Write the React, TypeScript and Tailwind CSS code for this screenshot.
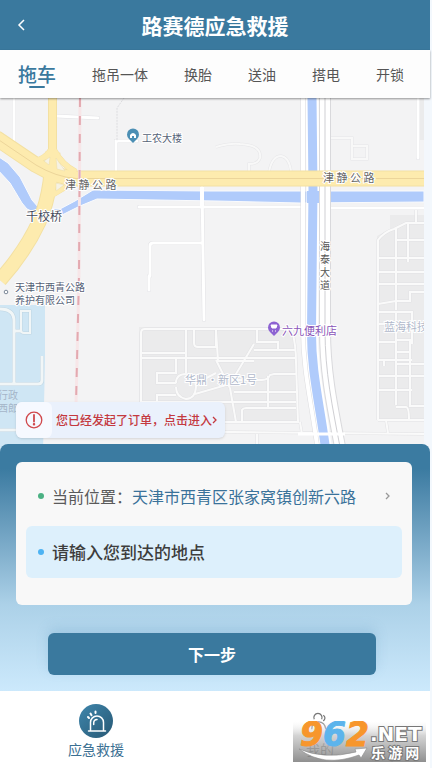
import React, { useState } from 'react';

const services = ['拖车', '拖吊一体', '换胎', '送油', '搭电', '开锁'];

const minorRoads = [
    'M14 98V143',
    'M56 116L98 118',
    'M116 172V141H137',
    'M139 207H302',
    'M150 276V246Q150 243 153 243H202',
    'M202 186L204 320',
    'M149 276V290',
    'M418 98V158',
    'M329 208H424',
];

const blockRoads = [
    'M141 432V333Q141 329 145 329H290',
    'M141 353H185M141 358H295',
    'M186 329V373M194 329V343Q194 347 198 347H216V330',
    'M176 358V373H157V383H176M157 403V395H176M141 402H296',
    'M176 383Q176 374 186 374Q196 376 196 387Q195 399 186 399Q176 397 176 387',
    'M216 360L230 388M195 384L216 373M195 394L230 384L254 344M216 330L218 361H254',
    'M257 330V342H278V350M254 350H295M230 380H262Q268 380 270 375L274 374H296',
    'M268 376V408M230 388L236 422M234 392H296M242 422V410Q243 408 246 408H296',
    'M292 330Q296 345 296 362L298 422H139',
    'M139 431L424 434M257 434V446M300 422L302 434',
    'M378 420V240Q384 232 394 229L406 223H424M416 210V223',
    'M396 228V310M408 224V262M378 258H424M378 272H424M396 240H424',
    'M378 284H424M378 304L396 301H410V292H424M378 312H412V344M396 312V405',
    'M378 324H396M378 342H396M396 340H410V406H424M378 360H412M384 360V366',
    'M378 376H424M396 364H424M378 390H412M396 407H406Q409 407 409 420',
    'M378 420H424M386 420L388 433M396 352H410',
];

function MapView() {
    return (
        <svg viewBox="0 98 430 354" className="block w-full" role="img" aria-label="地图">
            <rect x="0" y="98" width="430" height="354" fill="#f3f7fc" />
            <rect x="0" y="98" width="424" height="354" fill="#f3f3f4" />

            {/* Zones bâties */}
            <path d="M139 327H294L299 423H139Z" fill="#ebebec" />
            <path d="M377 420V236L390 229V215H424V420Z" fill="#ebebec" />
            <path d="M418 98H424V140H418Z" fill="#ebebec" />
            <path d="M0 305H45V360L43 452H0Z" fill="#cfe6f4" />
            <g fill="none" stroke="#bfd5e2" strokeWidth="4">
                <path d="M0 309Q14 309 14 321V384M0 384H38Q42 384 42 380V356M14 331H21M0 430H16" />
                <path d="M21 311H30V333H24Q21 333 21 330Z" strokeWidth="3" />
            </g>
            <g fill="none" stroke="#f1f6f7" strokeWidth="3">
                <path d="M0 309Q14 309 14 321V384M0 384H38Q42 384 42 380V356M14 331H21M0 430H16" />
                <path d="M21 311H30V333H24Q21 333 21 330Z" strokeWidth="2" />
            </g>

            {/* Petites routes */}
            {blockRoads.map((d) => <path key={d} d={d} fill="none" stroke="#e2e2e4" strokeWidth="3" />)}
            {blockRoads.map((d) => <path key={d} d={d} fill="none" stroke="#fafafa" strokeWidth="2" />)}
            {minorRoads.map((d) => <path key={d} d={d} fill="none" stroke="#e2e2e5" strokeWidth="4" strokeLinecap="round" />)}
            {minorRoads.map((d) => <path key={d} d={d} fill="none" stroke="#fff" strokeWidth="3" strokeLinecap="round" />)}
            <g fill="none">
                <path d="M216 147Q230 143 240 144Q262 145 260 158Q258 164 249 164V172M269 172Q272 156 281 156Q289 157 291 171M330 138H352V159H367V146H352" stroke="#e6e6e8" strokeWidth="3" />
                <path d="M216 147Q230 143 240 144Q262 145 260 158Q258 164 249 164V172M269 172Q272 156 281 156Q289 157 291 171M330 138H352V159H367V146H352" stroke="#f8f8f8" strokeWidth="2" />
                <path d="M124 98L117 108V141" stroke="#dcdcdf" strokeWidth="1" strokeDasharray="2 1" />
            </g>

            {/* Canal */}
            <path
                d="M-4 155L8 163L20 177L32 200L39 208L60 209L75 201L93 190L210 191H424V202L300 203L216 201L97 199L80 206L62 215L40 215L27 209L22 203L10 183L-4 168Z"
                fill="#b0cbfb"
                stroke="#fafbfd"
                strokeWidth="1"
            />
            <path d="M312 98L313 190L311.500 330C311 372 320 405 326 452" fill="none" stroke="#fff" strokeWidth="13" />
            <path d="M312 98L313 190L311.500 330C311 372 320 405 326 452" fill="none" stroke="#b0cbfb" strokeWidth="9" />
            <path d="M307 191H319V203H307Z" fill="#b0cbfb" />

            {/* Avenue nord-sud */}
            <g fill="none">
                <path d="M303 98V330C303 372 312 405 318 452" stroke="#dcdcdf" strokeWidth="5" />
                <path d="M303 98V330C303 372 312 405 318 452" stroke="#fff" strokeWidth="4" />
                <path d="M325 98V330C325 372 332 405 341 452" stroke="#d9d9dc" strokeWidth="12" />
                <path d="M325 98V330C325 372 332 405 341 452" stroke="#fff" strokeWidth="10" />
                <path d="M325 98V330C325 372 332 405 341 452" stroke="#cfcfd3" strokeWidth="1" />
                <path d="M202 187V206" stroke="#fff" strokeWidth="4" />
                <path d="M298 434H345" stroke="#fff" strokeWidth="3" />
            </g>

            {/* Routes principales */}
            <g fill="none" stroke="#f3e0a2">
                <path d="M-4 138L36 165Q56 177 76 178.500H424" strokeWidth="16" />
                <path d="M52.500 98V160" strokeWidth="9" />
                <path d="M53 152L50 182Q47 204 39 222Q25 252 0 280" strokeWidth="15" />
                <path d="M51 150Q45 159 35 161M54 150Q62 165 76 172M52 195L72 183" strokeWidth="6" />
            </g>
            <g fill="none" stroke="#fdebae">
                <path d="M-4 138L36 165Q56 177 76 178.500H424" strokeWidth="14" />
                <path d="M52.500 98V160" strokeWidth="7" />
                <path d="M53 152L50 182Q47 204 39 222Q25 252 0 280" strokeWidth="13" />
                <path d="M51 150Q45 159 35 161M54 150Q62 165 76 172M52 195L72 183" strokeWidth="5" />
            </g>
            <path d="M50 157L44 161L49 165ZM56 158L57 169L65 171ZM56 183V191L64 185Z" fill="#f6f2e4" stroke="#eddca8" strokeWidth="0.500" />
            <path d="M-4 138L36 165Q56 177 76 178.500H424" fill="none" stroke="#ecd59a" strokeWidth="1" />

            <path d="M80 98L79 275L76 404" fill="none" stroke="#f7e6e8" strokeWidth="3" />
            <path d="M80 98L79 275L76 404" fill="none" stroke="#e3a9b0" strokeWidth="2" strokeDasharray="9 9" />

            {/* Repères */}
            <path d="M133 143L129 139A6 6 0 1 1 137 139Z" fill="#4c8fb4" />
            <path d="M130 138V135Q133 131 136 135V138H134V136H132V138Z" fill="#fff" />
            <path d="M274 336L270 332A6 6 0 1 1 278 332Z" fill="#8d63d2" />
            <path d="M271 325H277L276 328H272Z" fill="#fff" stroke="#fff" strokeWidth="1" />
            <path d="M272 331H273M275 331H276" stroke="#fff" strokeWidth="1" />
            <circle cx="6" cy="292" r="1.800" fill="#fff" stroke="#7c8898" strokeWidth="1" />

            <g fontFamily="'Noto Sans CJK SC', sans-serif" fontSize="10" fill="#566277" stroke="#fff" strokeWidth="2" paintOrder="stroke">
                <text x="142" y="142">工农大楼</text>
                <text x="65" y="189" fontSize="11" fill="#666">津 静 公 路</text>
                <text x="323" y="182" fontSize="11" fill="#666">津 静 公 路</text>
                <text x="26" y="221" fontSize="12" fill="#444b5a">千校桥</text>
                <text x="15" y="291" fontSize="10">天津市西青公路</text>
                <text x="15" y="304" fontSize="10">养护有限公司</text>
                <text y="250" fill="#555">
                    <tspan x="320">海</tspan>
                    <tspan x="320" dy="13">泰</tspan>
                    <tspan x="320" dy="13">大</tspan>
                    <tspan x="320" dy="13">道</tspan>
                </text>
                <text x="282" y="335" fontSize="11" fill="#8a55b8">六九便利店</text>
                <text x="185" y="384" fontSize="11" fill="#b1b9cb">华鼎·新区1号</text>
                <text x="384" y="331" fontSize="11" fill="#b1b9cb">蓝海科技</text>
                <text x="-2" y="399" fill="#a5b5c8" stroke="none">行政</text>
                <text x="-2" y="412" fill="#a5b5c8" stroke="none">西郎</text>
            </g>
            <rect x="424" y="98" width="6" height="354" fill="#f3f7fc" />
        </svg>
    );
}

function Watermark() {
    return (
        <svg viewBox="293 721 133 41" className="absolute right-1 bottom-[6px] w-[133px]" role="img" aria-label="962.NET 乐游网">
            <defs>
                <linearGradient id="shade" x1="0" y1="0" x2="0" y2="1">
                    <stop offset="0" stopColor="#fff" stopOpacity="0.200" />
                    <stop offset="0.350" stopColor="#c9c9c9" stopOpacity="0.800" />
                    <stop offset="1" stopColor="#7c7c7c" stopOpacity="0.850" />
                </linearGradient>
            </defs>
            <rect x="293" y="721" width="133" height="41" fill="url(#shade)" />
            <path d="M299 749Q324 760 356 752L355 749L367 748L361 758L359 755Q324 768 299 749Z" fill="#fff" stroke="#8b8b8b" strokeWidth="0.600" />
            <g fontFamily="'DejaVu Sans', sans-serif" fontWeight="bold">
                <text x="300" y="746" fontSize="33" fontStyle="italic" strokeWidth="1">
                    <tspan fill="#f7962c" stroke="#f7962c">9</tspan>
                    <tspan fill="#5cb4ec" stroke="#5cb4ec">6</tspan>
                    <tspan fill="#f7962c" stroke="#f7962c">2</tspan>
                </text>
                <text x="370" y="741" fontSize="20" fill="#fff" stroke="#777" strokeWidth="2" paintOrder="stroke">.NET</text>
            </g>
            <text x="371" y="758" fontSize="14" fontWeight="bold" fontFamily="'Noto Sans CJK SC', sans-serif" fill="#fff" stroke="#777" strokeWidth="2" paintOrder="stroke">乐 游 网</text>
        </svg>
    );
}

export default function App() {
    const [active, setActive] = useState('拖车');
    const [destination, setDestination] = useState('');

    return (
        <div className="bg-[#f3f8fd] pr-[2px] font-['Noto_Sans_CJK_SC',sans-serif]">
            <header className="grid h-[50px] grid-cols-[48px_1fr_48px] items-center bg-[#3a799e] text-white">
                <button type="button" aria-label="返回" className="pl-[17px]">
                    <svg viewBox="0 0 8 12" className="h-3 w-2" fill="none" stroke="currentColor" strokeWidth="1.500">
                        <path d="M7 1L2 6L7 11" />
                    </svg>
                </button>
                <h1 className="text-center text-[21px] leading-7 font-bold">路赛德应急救援</h1>
            </header>

            <nav className="relative z-10 flex h-12 items-center justify-between bg-[#fdfdfd] pr-[26px] pl-[18px] shadow-[0_1px_2px_rgba(0,0,0,0.4)]">
                {services.map((name) => (
                    <button
                        key={name}
                        type="button"
                        onClick={() => setActive(name)}
                        className={
                            name === active
                                ? 'relative text-[19px] leading-7 font-medium text-[#3a799e]'
                                : 'text-sm text-[#555]'
                        }
                    >
                        {name}
                        {name === active && (
                            <span className="absolute bottom-0 left-1/2 h-[2px] w-4 -translate-x-1/2 rounded-full bg-[#3a799e]" />
                        )}
                    </button>
                ))}
            </nav>

            <section className="relative">
                <MapView />
                <a href="#order" className="absolute bottom-[14px] left-4 flex items-center rounded-md bg-[#eaf1fc] pr-2 text-xs font-medium text-[#c4393f] shadow-sm">
                    <span className="mr-1 flex h-9 w-9 items-center justify-center rounded-md bg-[#f6f9ff]">
                        <svg viewBox="0 0 18 18" className="h-[18px] w-[18px]" fill="none" stroke="#d0484c" strokeWidth="1.300">
                            <circle cx="9" cy="9" r="7.800" />
                            <path d="M9 4V10.500" strokeWidth="1.800" strokeLinecap="round" />
                            <circle cx="9" cy="13.200" r="0.600" fill="#d0484c" />
                        </svg>
                    </span>
                    您已经发起了订单，点击进入
                    <svg viewBox="0 0 5 8" className="h-2 w-[5px]" fill="none" stroke="currentColor" strokeWidth="1.300">
                        <path d="M1 1L4 4L1 7" />
                    </svg>
                </a>
            </section>

            <main className="relative -mt-2 rounded-t-lg bg-linear-to-b from-[#3b7ba1] from-10% via-[#acd1e8] via-65% to-[#cce9fc] pt-[18px] pr-[18px] pb-4 pl-4">
                <div className="rounded-md bg-[#f8f8f8] px-[10px] pt-[14px] pb-[27px]">
                    <button type="button" className="flex h-10 w-full items-center pr-3 pl-3 text-base whitespace-nowrap">
                        <span className="mr-2 h-[6px] w-[6px] rounded-full bg-[#4bb183]" />
                        <span className="text-[#5a5a5a]">当前位置：</span>
                        <span className="text-[#3a729a]">天津市西青区张家窝镇创新六路</span>
                        <svg viewBox="0 0 5 8" className="ml-auto h-2 w-[5px] shrink-0" fill="none" stroke="#999" strokeWidth="1.300">
                            <path d="M1 1L4 4L1 7" />
                        </svg>
                    </button>
                    <label className="mt-[10px] flex h-[52px] items-center rounded-md bg-[#ddf0fc] pl-3">
                        <span className="mr-2 h-[6px] w-[6px] rounded-full bg-[#4db3f3]" />
                        <input
                            type="text"
                            aria-label="目的地"
                            value={destination}
                            onChange={(e) => setDestination(e.target.value)}
                            placeholder="请输入您到达的地点"
                            className="min-w-0 flex-1 bg-transparent text-[17px] font-medium text-[#3d3d3d] outline-none placeholder:text-[#3d3d3d]"
                        />
                    </label>
                </div>
                <div className="mt-7 pr-9 pl-8">
                    <button type="button" className="h-[42px] w-full rounded-md bg-[#3a799e] text-base font-bold text-white shadow-[0_-5px_12px_rgba(90,150,190,0.25)]">
                        下一步
                    </button>
                </div>
            </main>

            <nav className="relative flex items-start justify-between bg-white pt-[13px] pr-24 pb-2 pl-[68px]">
                <a href="#rescue" className="flex flex-col items-center text-sm leading-[22px] text-[#3a6f92]">
                    <svg viewBox="0 0 34 34" className="h-[34px] w-[34px]">
                        <defs>
                            <linearGradient id="disc" x1="0" y1="0" x2="1" y2="1">
                                <stop offset="0" stopColor="#3f86ac" />
                                <stop offset="1" stopColor="#275874" />
                            </linearGradient>
                        </defs>
                        <circle cx="17" cy="17" r="17" fill="url(#disc)" />
                        <g fill="none" stroke="#fff" strokeWidth="1.500" strokeLinecap="round">
                            <path d="M11.500 26V18.500A6.500 6.500 0 0 1 24.500 18.500V26M9.500 27H26.500" />
                            <path d="M14.700 20.500V19A3.500 3.500 0 0 1 18 15.500" />
                            <path d="M9 13L10 14M11.500 9.500L12.500 11.300M16.500 7.500V9" strokeWidth="2" />
                        </g>
                    </svg>
                    应急救援
                </a>
                <a href="#mine" className="flex flex-col items-center text-sm leading-[22px] text-[#666]">
                    <svg viewBox="0 0 34 34" className="h-[34px] w-7" fill="none" stroke="#777" strokeWidth="1.500">
                        <path d="M10 15A5 5 0 1 1 19 15M21 10Q25 13 21 17M7 27Q7 18 15 18Q23 18 24 27" />
                    </svg>
                    我的
                </a>
                <Watermark />
            </nav>
        </div>
    );
}
